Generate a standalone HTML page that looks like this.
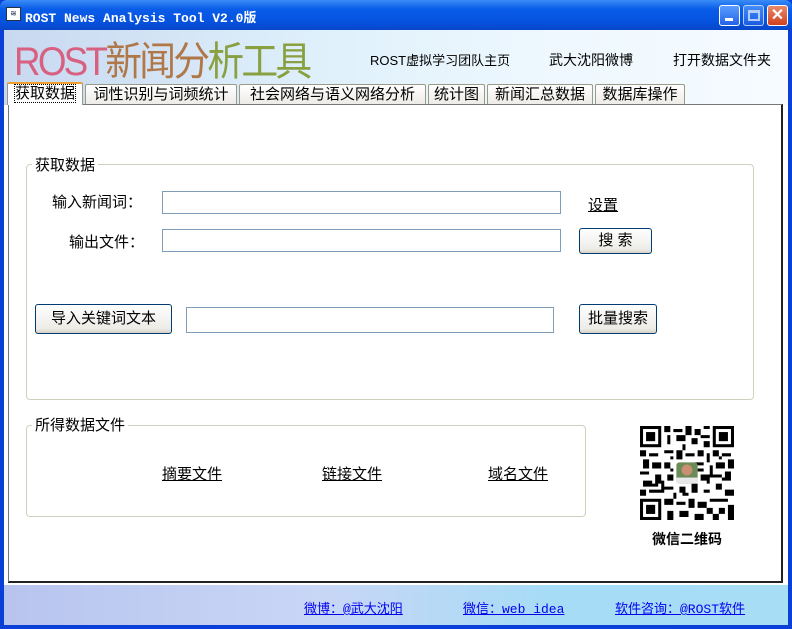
<!DOCTYPE html>
<html><head><meta charset="utf-8"><style>
*{margin:0;padding:0;box-sizing:border-box}
body{width:792px;height:629px;overflow:hidden;font-family:"Liberation Sans","Noto Sans CJK SC","WenQuanYi Zen Hei",sans-serif;font-size:14px;color:#000;background:#0a3fd8;position:relative}
.abs{position:absolute}
#title{left:0;top:0;width:792px;height:30px;background:linear-gradient(#3a8cf6,#0a5de8 30%,#0553e0 70%,#0846c8);border-radius:7px 7px 0 0}
#title .t{left:25px;top:7px;color:#fff;font-family:"Liberation Mono","Noto Sans CJK SC",monospace;font-weight:bold;font-size:13px}
.wb{top:5px;width:21px;height:21px;border:1px solid #fff;border-radius:3px;background:linear-gradient(#5a9cff,#2463e8)}
#client{left:4px;top:30px;width:784px;height:595px;background:#fff}
#hdr{left:4px;top:30px;width:784px;height:75px;background:linear-gradient(90deg,#c8d8f0,#dff0fb 40%,#eef8fe 70%,#f6fbff)}
#ftr{left:4px;top:585px;width:784px;height:40px;background:linear-gradient(90deg,#b8c4ee,#c9d6f6 40%,#a6dcf6 70%,#a8ddf6)}
.tab{top:84px;height:21px;border:1px solid #9a9a8a;border-bottom:none;background:linear-gradient(#fff,#ecebe6);font-size:15px;line-height:19px;text-align:center;border-radius:2px 2px 0 0;white-space:nowrap;overflow:hidden}
#panel{left:8px;top:104px;width:775px;height:479px;background:#fff;border:1px solid #777;border-right:2px solid #222;border-bottom:2px solid #222}
.grp{border:1px solid #d0d0bf;border-radius:4px}
.lg{background:#fff;padding:0 3px;font-size:15px}
.inp{height:23px;border:1px solid #7f9db9;background:#fff}
.btn{border:1px solid #003c74;border-radius:3px;background:linear-gradient(#fff,#ecebe6 85%,#d6d0c5);font-size:15px;text-align:center}
.lnk{text-decoration:underline;font-size:15px}
.fl{color:#0000ee;text-decoration:underline;font-size:13px;font-family:"Liberation Mono","Noto Sans CJK SC",monospace}
</style></head><body>
<div id="title" class="abs">
<div class="abs" style="left:6px;top:7px;width:15px;height:14px;background:#fff;border:1px solid #234;font-size:8px;color:#124;text-align:center;line-height:12px">≋</div>
<div class="abs t">ROST News Analysis Tool V2.0版</div>
<div class="abs wb" style="left:719px"><div class="abs" style="left:5px;top:12px;width:8px;height:3px;background:#fff"></div></div>
<div class="abs wb" style="left:743px;opacity:.7"><div class="abs" style="left:4px;top:4px;width:12px;height:11px;border:2px solid #fff;border-top-width:3px"></div></div>
<div class="abs wb" style="left:767px;background:linear-gradient(#e88a6a,#d2401e);color:#fff;font-weight:bold;text-align:center;line-height:19px;font-size:16px">✕</div>
</div>
<div id="client" class="abs"></div>
<div id="hdr" class="abs"></div>
<div class="abs" style="left:14px;top:38px;font-size:40px;line-height:48px;letter-spacing:-3px;font-family:'Liberation Sans','Noto Sans CJK SC',sans-serif;transform:scaleX(0.92);transform-origin:left"><span style="color:#d86080">ROST</span><span style="color:#b07848">新闻分</span><span style="color:#88a040">析工具</span></div>
<div class="abs" style="left:370px;top:50px;font-size:13px">ROST虚拟学习团队主页</div>
<div class="abs" style="left:549px;top:50px;font-size:14px">武大沈阳微博</div>
<div class="abs" style="left:673px;top:50px;font-size:14px">打开数据文件夹</div>
<div class="abs tab" style="left:7px;width:76px;top:82px;height:23px;border-top:2px solid #f0a030;background:#fff;z-index:2"><span style="outline:1px dotted #000">获取数据</span></div>
<div class="abs tab" style="left:85px;width:152px">词性识别与词频统计</div>
<div class="abs tab" style="left:239px;width:187px">社会网络与语义网络分析</div>
<div class="abs tab" style="left:428px;width:57px">统计图</div>
<div class="abs tab" style="left:487px;width:106px">新闻汇总数据</div>
<div class="abs tab" style="left:595px;width:90px">数据库操作</div>
<div id="panel" class="abs"></div>
<div class="abs grp" style="left:26px;top:164px;width:728px;height:236px"></div>
<div class="abs lg" style="left:32px;top:154px">获取数据</div>
<div class="abs" style="left:52px;top:191px;font-size:15px">输入新闻词：</div>
<div class="abs inp" style="left:162px;top:191px;width:399px"></div>
<div class="abs lnk" style="left:588px;top:194px">设置</div>
<div class="abs" style="left:69px;top:231px;font-size:15px">输出文件：</div>
<div class="abs inp" style="left:162px;top:229px;width:399px"></div>
<div class="abs btn" style="left:579px;top:228px;width:73px;height:26px;line-height:24px">搜 索</div>
<div class="abs btn" style="left:35px;top:304px;width:137px;height:30px;line-height:28px">导入关键词文本</div>
<div class="abs inp" style="left:186px;top:307px;width:368px;height:26px"></div>
<div class="abs btn" style="left:579px;top:304px;width:78px;height:30px;line-height:28px">批量搜索</div>
<div class="abs grp" style="left:26px;top:425px;width:560px;height:92px"></div>
<div class="abs lg" style="left:32px;top:414px">所得数据文件</div>
<div class="abs lnk" style="left:162px;top:463px">摘要文件</div>
<div class="abs lnk" style="left:322px;top:463px">链接文件</div>
<div class="abs lnk" style="left:488px;top:463px">域名文件</div>
<svg class="abs" style="left:640px;top:426px" width="94" height="94" viewBox="0 0 31 31">
<rect width="31" height="31" fill="#fff"/>
<g fill="#000">
<rect x="0" y="0" width="7" height="7"/><rect x="24" y="0" width="7" height="7"/><rect x="0" y="24" width="7" height="7"/>
</g>
<g fill="#fff"><rect x="1" y="1" width="5" height="5"/><rect x="25" y="1" width="5" height="5"/><rect x="1" y="25" width="5" height="5"/></g>
<g fill="#000"><rect x="2" y="2" width="3" height="3"/><rect x="26" y="2" width="3" height="3"/><rect x="2" y="26" width="3" height="3"/>
<path d="M8 0h2v2h-2zM11 1h3v1h-3zM15 0h2v3h-2zM18 1h2v2h-2zM21 0h2v1h-2zM9 3h1v3h-1zM12 3h3v2h-3zM17 4h2v2h-2zM20 3h3v1h-3zM21 5h2v2h-2zM8 8h3v1h-3zM0 8h2v2h-2zM3 9h3v1h-3zM1 11h2v3h-2zM4 12h3v2h-3zM0 15h3v1h-3zM5 16h2v3h-2zM1 18h3v2h-3zM0 21h2v2h-2zM3 21h4v1h-4zM24 8h2v2h-2zM27 9h3v1h-3zM25 12h3v2h-3zM29 11h2v3h-2zM24 16h3v1h-3zM28 15h2v3h-2zM25 19h2v2h-2zM28 21h3v2h-3zM12 8h2v3h-2zM15 9h3v1h-3zM19 8h2v2h-2zM22 9h1v3h-1zM8 12h2v2h-2zM18 12h3v1h-3zM9 16h2v2h-2zM20 16h3v2h-3zM8 20h3v1h-3zM13 20h2v2h-2zM17 19h2v3h-2zM21 21h2v1h-2zM8 24h3v2h-3zM12 25h3v1h-3zM16 24h2v3h-2zM19 25h3v2h-3zM23 24h2v1h-2zM9 28h2v3h-2zM13 28h3v2h-3zM18 29h3v2h-3zM22 27h2v2h-2zM25 24h4v1h-4zM26 27h2v2h-2zM29 26h2v5h-2zM24 29h2v2h-2zM11 22h1v2h-1zM7 18h1v4h-1zM23 13h1v4h-1zM14 6h1v2h-1zM10 10h1v1h-1zM16 14h-1v-1h1zM2 13h1v1h-1zM26 10h1v1h-1zM19 14h2v1h-2zM10 14h1v1h-1zM14 22h2v1h-2zM22 18h1v1h-1zM4 19h2v1h-2zM27 17h1v1h-1z"/></g>
<rect x="12" y="12" width="7" height="7" rx="1" fill="#6a8a58"/><circle cx="15.5" cy="14.5" r="1.8" fill="#c89070"/><rect x="12" y="17" width="7" height="2" fill="#e8e8e8"/>
</svg>
<div class="abs" style="left:652px;top:529px;font-weight:bold;font-size:14px">微信二维码</div>
<div id="ftr" class="abs"></div>
<div class="abs fl" style="left:304px;top:598px">微博：@武大沈阳</div>
<div class="abs fl" style="left:463px;top:598px">微信：web idea</div>
<div class="abs fl" style="left:615px;top:598px">软件咨询：@ROST软件</div>
</body></html>
